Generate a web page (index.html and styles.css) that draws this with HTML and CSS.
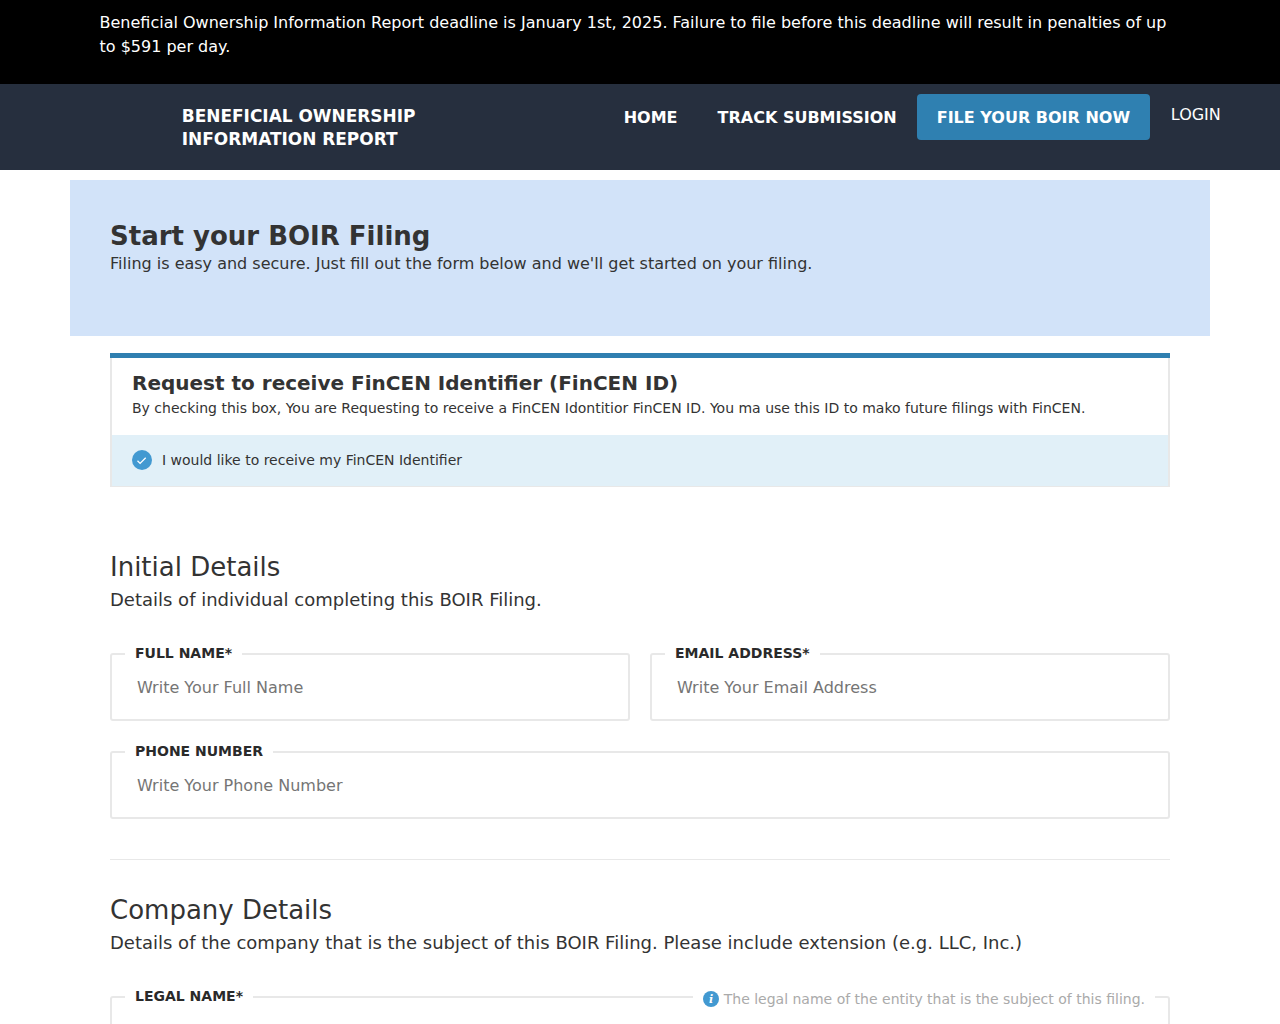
FILE: index.html
```html
<!DOCTYPE html>
<html lang="en">
<head>
<meta charset="utf-8">
<title>Start your BOIR Filing</title>
<link rel="stylesheet" href="styles.css">
</head>
<body>
<div class="banner"><p>Beneficial Ownership Information Report deadline is January 1st, 2025. Failure to file before this deadline will result in penalties of up to $591 per day.</p></div>
<header class="nav">
  <a class="brand" href="#">BENEFICIAL OWNERSHIP<br>INFORMATION REPORT</a>
  <nav class="links">
    <a class="link" href="#">HOME</a>
    <a class="link" href="#">TRACK SUBMISSION</a>
    <a class="cta" href="#">FILE YOUR BOIR NOW</a>
    <a class="login" href="#">LOGIN</a>
  </nav>
</header>
<main class="page">
  <section class="hero">
    <h1>Start your BOIR Filing</h1>
    <p>Filing is easy and secure. Just fill out the form below and we'll get started on your filing.</p>
  </section>
  <form class="form">
    <section class="fincen">
      <div class="fincen-body">
        <div class="fincen-head">
          <h2>Request to receive FinCEN Identifier (FinCEN ID)</h2>
          <p>By checking this box, You are Requesting to receive a FinCEN Idontitior FinCEN ID. You ma use this ID to mako future filings with FinCEN.</p>
        </div>
        <div class="fincen-check">
          <svg class="check" width="20" height="20" viewBox="0 0 20 20"><circle cx="10" cy="10" r="10" fill="#4299d1"/><path d="M5.5 10.8l2.6 2.6L13.7 7.8" fill="none" stroke="#fff" stroke-width="1.3"/></svg>
          <span>I would like to receive my FinCEN Identifier</span>
        </div>
      </div>
    </section>
    <section class="group first">
      <h3>Initial Details</h3>
      <p class="sub">Details of individual completing this BOIR Filing.</p>
      <div class="grid">
        <fieldset class="field"><legend><span class="lab">FULL NAME*</span></legend><input placeholder="Write Your Full Name"></fieldset>
        <fieldset class="field"><legend><span class="lab">EMAIL ADDRESS*</span></legend><input placeholder="Write Your Email Address"></fieldset>
        <fieldset class="field wide"><legend><span class="lab">PHONE NUMBER</span></legend><input placeholder="Write Your Phone Number"></fieldset>
      </div>
    </section>
    <hr class="rule">
    <section class="group">
      <h3>Company Details</h3>
      <p class="sub">Details of the company that is the subject of this BOIR Filing. Please include extension (e.g. LLC, Inc.)</p>
      <div class="grid">
        <fieldset class="field wide"><legend class="split"><span class="lab">LEGAL NAME*</span><span class="line"></span><span class="hint"><svg width="16" height="16" viewBox="0 0 16 16"><circle cx="8" cy="8" r="8" fill="#4299d1"/><text x="8" y="12.2" text-anchor="middle" class="i">i</text></svg>The legal name of the entity that is the subject of this filing.</span></legend><input></fieldset>
      </div>
    </section>
  </form>
</main>
</body>
</html>
```
FILE: styles.css
```css
* { box-sizing: border-box; }
html, body { margin: 0; padding: 0; }
body { font-family: "DejaVu Sans", sans-serif; color: #333; background: #fff; height: 1024px; overflow: hidden; }
a { text-decoration: none; color: inherit; }
p, h1, h2, h3 { margin: 0; }

.banner { background: #000; color: #fff; height: 84px; padding: 11px 100px 0 99.5px; font-size: 16px; line-height: 24px; }
.nav { background: #262f3e; height: 86px; padding: 10px 59.2px 0 181.8px; display: flex; justify-content: space-between; color: #fff; }
.brand { font-weight: 700; font-size: 16.95px; line-height: 23.7px; margin-top: 10.5px; }
.links { display: flex; align-items: flex-start; }
.link { font-weight: 700; font-size: 16px; line-height: 46px; padding: 1px 20px 0; }
.cta { background: #2f80b1; border-radius: 4px; font-weight: 700; font-size: 16px; line-height: 46px; padding: 1px 20px 0; height: 46px; }
.login { font-size: 16px; line-height: 20px; margin-left: 20.7px; margin-top: 11px; }

.page { padding: 10px 70px 0; }
.hero { background: #d2e3f9; height: 156px; padding: 41px 40px 0; }
.hero h1 { font-size: 26px; line-height: 30px; font-weight: 700; }
.hero p { font-size: 16px; line-height: 24px; margin-top: 1px; }

.form { padding: 17px 40px 0; }
.fincen { border-top: 5px solid #2f7fb0; }
.fincen-body { border: 2px solid #e8e8e8; border-top: 0; border-bottom-width: 1px; }
.fincen-head { padding: 12px 20px 0; height: 77px; }
.fincen h2 { font-size: 20px; line-height: 26px; font-weight: 700; }
.fincen p { font-size: 14px; line-height: 24px; }
.fincen-check { background: #e1f0f8; height: 51px; display: flex; align-items: center; gap: 10px; padding: 0 20px 2px; font-size: 14px; }
.check { flex: none; }

.group.first { margin-top: 64px; }
.group h3 { font-size: 26px; line-height: 32px; font-weight: 400; }
.sub { font-size: 18px; line-height: 28px; margin-top: 3px; }
.grid { display: grid; grid-template-columns: 1fr 1fr; gap: 21px 20px; margin-top: 30px; }
.wide { grid-column: 1 / -1; }
.field { margin: 0; padding: 0 25px; min-width: 0; height: 77px; border: 2px solid #e8e8e8; border-radius: 3px; }
.field legend { padding: 0 0 2px; margin-left: -12px; font-size: 14px; line-height: 18px; font-weight: 700; color: #2a2a2a; }
.lab { padding: 0 10px; display: block; white-space: nowrap; }
.field input { display: block; width: 100%; border: 0; outline: 0; padding: 0; margin-top: 8px; height: 30px; font: 16px "DejaVu Sans", sans-serif; color: #333; background: transparent; }
.field input::placeholder { color: #757575; opacity: 1; }
.field .split { display: flex; align-items: flex-start; width: calc(100% + 24px); }
.line { flex: 1; height: 2px; background: #e8e8e8; margin-top: 9px; }
.hint { display: flex; align-items: center; gap: 5px; padding: 0 10px; font-size: 14px; font-weight: 400; color: #aaa; line-height: 18px; white-space: nowrap; margin: 3px 0 -3px; height: 18px; }
.i { fill: #fff; font: italic 700 11px "DejaVu Serif", serif; }
.rule { border: 0; border-top: 1px solid #e8e8e8; margin: 40px 0 34px; }
```
